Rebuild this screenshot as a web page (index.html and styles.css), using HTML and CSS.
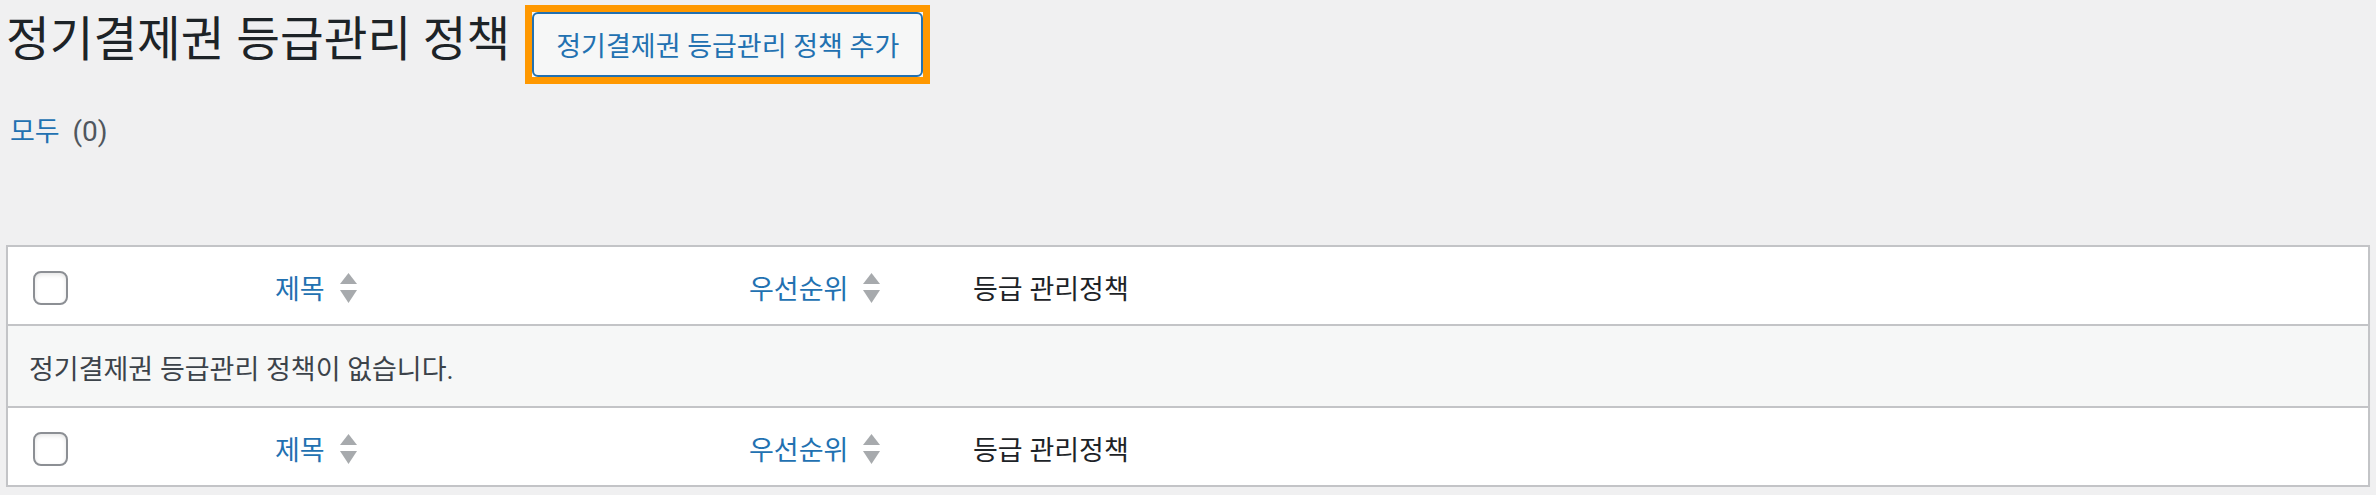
FILE: index.html
```html
<!DOCTYPE html>
<html lang="ko">
<head>
  <meta charset="UTF-8" />
  <meta name="viewport" content="width=device-width, initial-scale=1.0" />
  <title>정기결제권 등급관리 정책</title>
  <link rel="stylesheet" href="styles.css">
</head>
<body>
  <div class="wrap">
    <div class="heading">
      <h1 class="page-title">정기결제권 등급관리 정책</h1>
      <span class="highlight">
        <a href="#" class="page-title-action">정기결제권 등급관리 정책 추가</a>
      </span>
    </div>

    <ul class="subsubsub">
      <li><a href="#" class="current">모두</a> <span class="count">(0)</span></li>
    </ul>

    <table class="list-table">
      <thead>
        <tr>
          <th class="check-column"><input type="checkbox"></th>
          <th class="col-title sortable">
            <a href="#"><span>제목</span>
              <svg class="sorting-indicator" width="17" height="30" viewBox="0 0 17 30"><polygon points="8.5,0 17,11 0,11"/><polygon points="0,17 17,17 8.5,30"/></svg>
            </a>
          </th>
          <th class="col-priority sortable">
            <a href="#"><span>우선순위</span>
              <svg class="sorting-indicator" width="17" height="30" viewBox="0 0 17 30"><polygon points="8.5,0 17,11 0,11"/><polygon points="0,17 17,17 8.5,30"/></svg>
            </a>
          </th>
          <th class="col-grade">등급 관리정책</th>
        </tr>
      </thead>
      <tbody>
        <tr class="no-items">
          <td colspan="4">정기결제권 등급관리 정책이 없습니다.</td>
        </tr>
      </tbody>
      <tfoot>
        <tr>
          <th class="check-column"><input type="checkbox"></th>
          <th class="col-title sortable">
            <a href="#"><span>제목</span>
              <svg class="sorting-indicator" width="17" height="30" viewBox="0 0 17 30"><polygon points="8.5,0 17,11 0,11"/><polygon points="0,17 17,17 8.5,30"/></svg>
            </a>
          </th>
          <th class="col-priority sortable">
            <a href="#"><span>우선순위</span>
              <svg class="sorting-indicator" width="17" height="30" viewBox="0 0 17 30"><polygon points="8.5,0 17,11 0,11"/><polygon points="0,17 17,17 8.5,30"/></svg>
            </a>
          </th>
          <th class="col-grade">등급 관리정책</th>
        </tr>
      </tfoot>
    </table>
  </div>
</body>
</html>
```

FILE: styles.css
```css
body {
  margin: 0;
  background-color: #f0f0f1;
  color: #3c434a;
  font-family: Roboto, "Noto Sans CJK KR", sans-serif;
}
.wrap {
  padding: 0 6px;
}
.heading {
  display: flex;
  align-items: flex-start;
}
.page-title {
  margin: 0;
  padding-top: 10px;
  font-size: 47.5px;
  line-height: 60px;
  font-weight: 400;
  color: #1d2327;
}
.highlight {
  display: flex;
  margin: 5px 0 0 15px;
  border: 7px solid #ff9800;
  background: #f6f7f7;
}
.page-title-action {
  display: inline-flex;
  align-items: center;
  box-sizing: border-box;
  height: 65px;
  padding: 0 22px;
  border: 2px solid #2271b1;
  border-radius: 6px;
  background: #f6f7f7;
  color: #2271b1;
  font-size: 27px;
  text-decoration: none;
}
.subsubsub {
  list-style: none;
  margin: 28px 0 0;
  padding: 0 0 0 4px;
  font-size: 27px;
  line-height: 40px;
  color: #50575e;
}
.subsubsub a {
  color: #2271b1;
  text-decoration: none;
}
.subsubsub .count {
  margin-left: 6px;
  font-size: 28px;
}
.list-table {
  width: 100%;
  margin-top: 93px;
  border: 2px solid #c3c4c7;
  border-spacing: 0;
  background: #fff;
  box-shadow: 0 1px 1px rgba(0,0,0,0.04);
}
.list-table th {
  height: 73px;
  padding: 4px 0 0;
  text-align: left;
  font-weight: 400;
  font-size: 27px;
  color: #1d2327;
  vertical-align: middle;
}
.list-table thead th {
  border-bottom: 2px solid #c3c4c7;
}
.list-table tfoot th {
  border-top: 2px solid #c3c4c7;
  height: 73px;
}
.check-column {
  width: 251px;
}
.check-column input {
  appearance: none;
  display: block;
  box-sizing: border-box;
  width: 35px;
  height: 34px;
  margin: 0 0 0 25px;
  border: 2px solid #8c8f94;
  border-radius: 8px;
  background: #fff;
  box-shadow: inset 0 2px 4px rgba(0,0,0,0.1);
}
.col-title {
  width: 474px;
}
.col-priority {
  width: 220px;
}
.sortable a {
  display: flex;
  align-items: center;
  gap: 15px;
  padding-left: 16px;
  color: #2271b1;
  text-decoration: none;
}
.sorting-indicator {
  fill: #a7aaad;
}
.col-grade {
  padding-left: 20px !important;
}
.no-items td {
  height: 78px;
  padding: 2px 0 0 21px;
  background: #f6f7f7;
  font-size: 27px;
  color: #3c434a;
}
```
